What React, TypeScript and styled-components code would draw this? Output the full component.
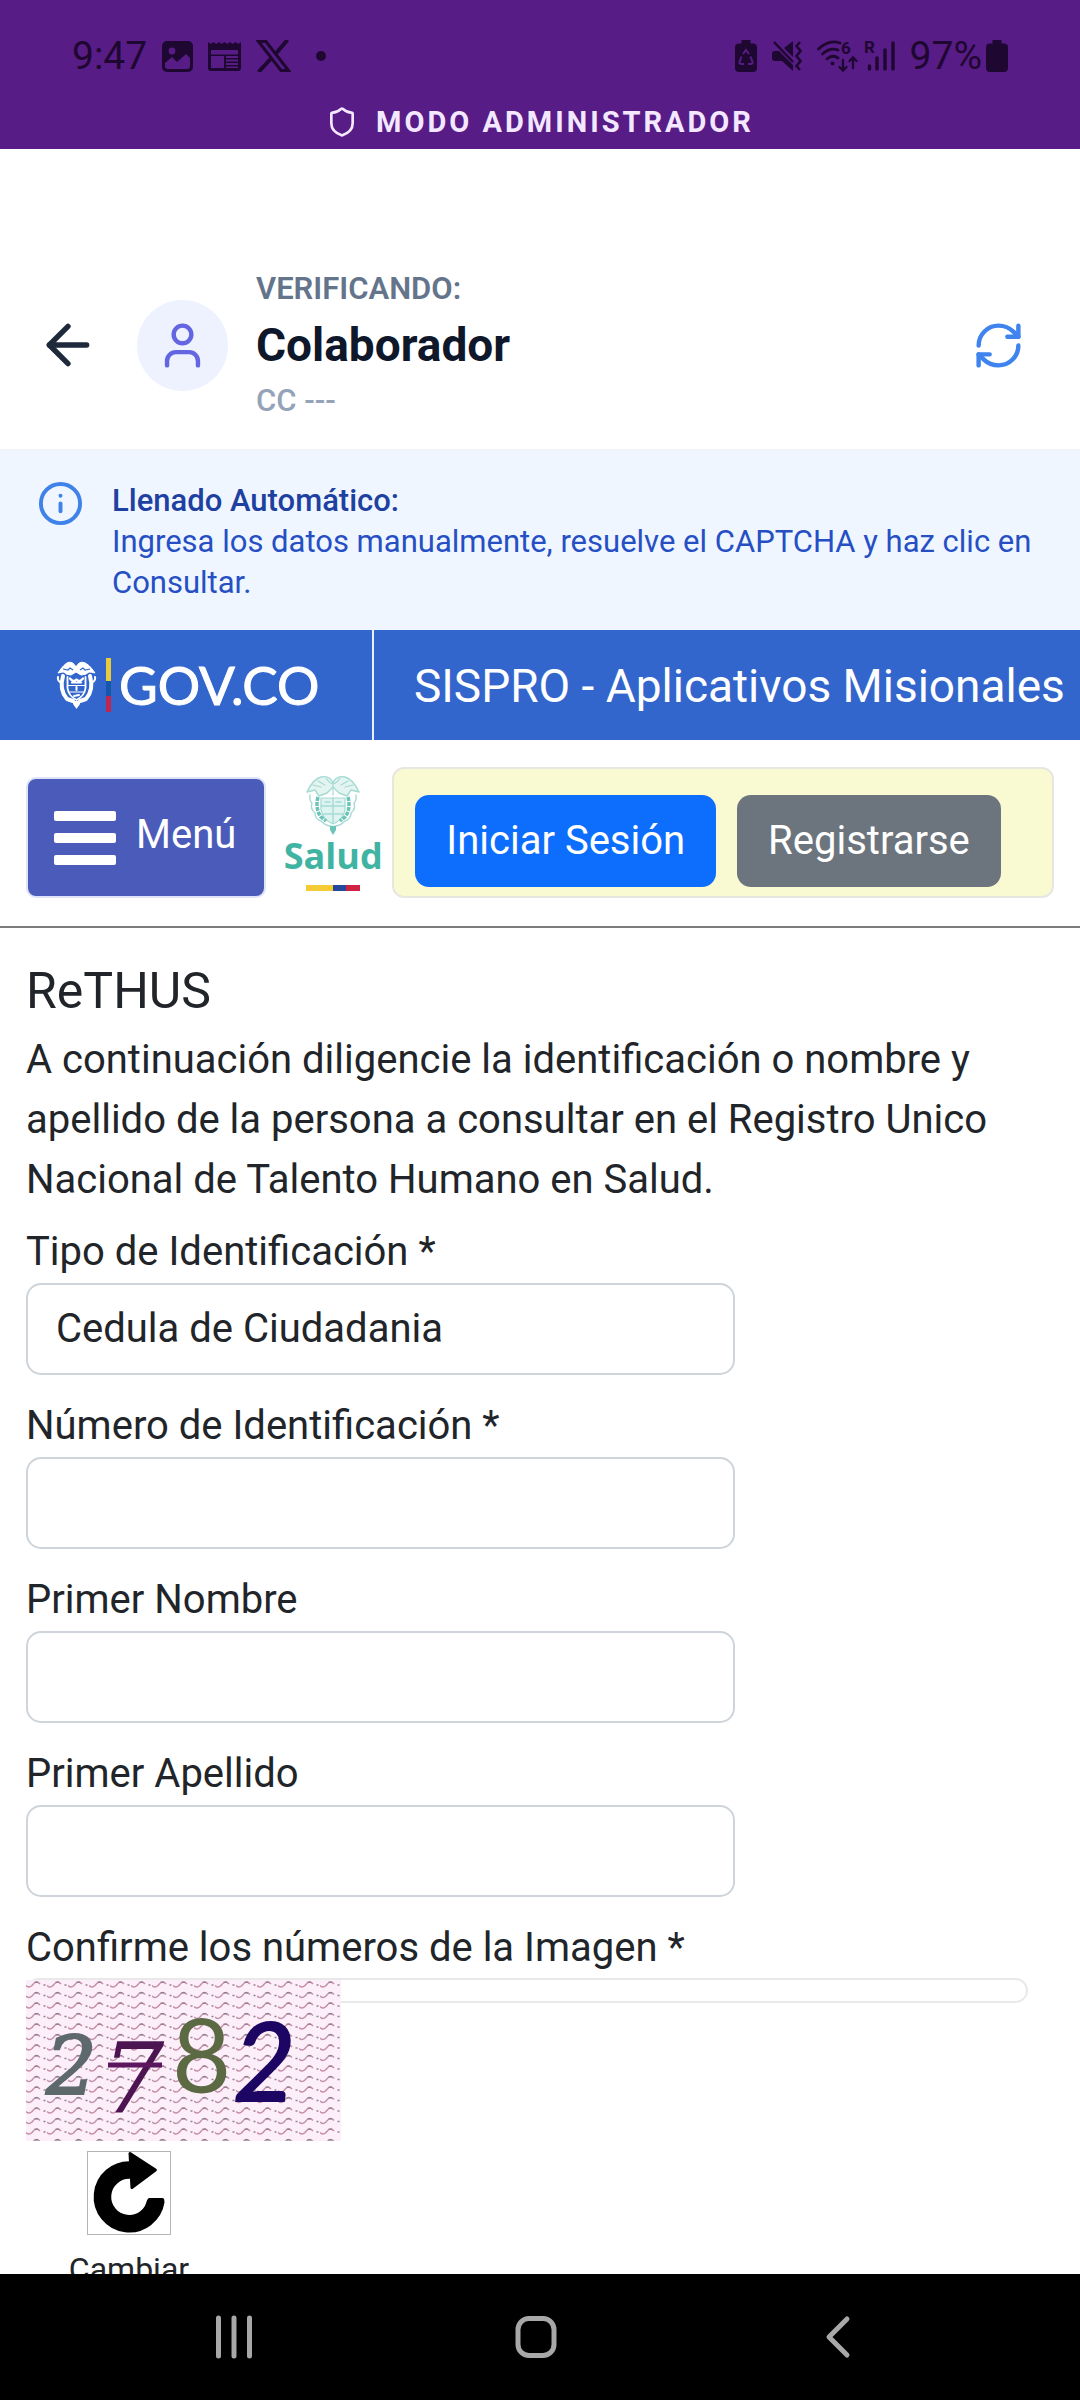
import React from "react";
import styled, { createGlobalStyle } from "styled-components";
import { ArrowLeft, Info, RefreshCw, Shield, User } from "lucide-react";

const GlobalStyle = createGlobalStyle`
  *, *::before, *::after { box-sizing: border-box; }
  body {
    margin: 0;
    background: #ffffff;
    color: #212529;
    font-family: Roboto, "Noto Sans", sans-serif;
  }
  button, input, select { font: inherit; color: inherit; }
`;

const Screen = styled.div`
  display: flex;
  flex-direction: column;
  height: 100vh;
  overflow: hidden;
`;

const Content = styled.div`
  flex: 1;
  min-height: 0;
  overflow: hidden;
`;

/* ---------- status area ---------- */

const TopArea = styled.div`
  flex: none;
  padding: 34px 72px 7px;
  background: #581c87;
`;

const StatusRow = styled.div`
  display: flex;
  align-items: center;
  justify-content: space-between;
  height: 44px;
  margin-bottom: 24px;
  color: #1e0730;
  font-size: 39px;
  line-height: 44px;
`;

const StatusGroup = styled.div<{ $gap: number }>`
  display: flex;
  align-items: center;
  gap: ${(p) => p.$gap}px;
  svg { display: block; }
`;

const Dot = styled.span`
  width: 10px;
  height: 10px;
  margin-left: 10px;
  border-radius: 50%;
  background: currentColor;
`;

const AdminMode = styled.div`
  display: flex;
  align-items: center;
  justify-content: center;
  gap: 18px;
  color: #f3e8ff;
  font-size: 29px;
  font-weight: 700;
  line-height: 40px;
  letter-spacing: 3px;
`;

/* ---------- header ---------- */

const Header = styled.header`
  display: flex;
  align-items: center;
  padding: 120px 55px 28px 36px;
  border-bottom: 2px solid #f1f5f9;
`;

const IconButton = styled.button<{ $color: string }>`
  display: flex;
  flex: none;
  padding: 0;
  border: 0;
  background: none;
  color: ${(p) => p.$color};
`;

const Avatar = styled.div`
  display: flex;
  flex: none;
  align-items: center;
  justify-content: center;
  width: 91px;
  height: 91px;
  margin: 0 28px 0 37px;
  border-radius: 50%;
  background: #eef2ff;
  color: #6366e0;
`;

const Person = styled.div`
  display: flex;
  flex: 1;
  flex-direction: column;
  gap: 8px;
`;

const Overline = styled.span`
  color: #64748b;
  font-size: 31px;
  font-weight: 600;
  line-height: 40px;
`;

const PersonName = styled.h1`
  margin: 0;
  color: #0f172a;
  font-size: 46px;
  font-weight: 700;
  line-height: 56px;
`;

const PersonId = styled.span`
  color: #94a3b8;
  font-size: 31px;
  font-weight: 500;
  line-height: 40px;
`;

const Notice = styled.section`
  display: flex;
  gap: 28px;
  padding: 29px 37px 27px;
  background: #eff6ff;
  color: #264fc4;
  font-size: 31px;
  line-height: 41px;
  svg { flex: none; color: #3f83e8; }
  p { margin: 0; }
`;

const NoticeTitle = styled.strong`
  display: block;
  color: #1e40a0;
  font-weight: 500;
`;

/* ---------- government bar ---------- */

const GovBar = styled.div`
  display: flex;
  height: 110px;
  background: #3366cc;
  color: #ffffff;
`;

const GovLogo = styled.a`
  display: flex;
  flex: none;
  align-items: center;
  width: 374px;
  padding-left: 56px;
  border-right: 2px solid #e8effb;
  color: inherit;
  text-decoration: none;
`;

const GovName = styled.span`
  font-family: Lato, "Open Sans", sans-serif;
  font-size: 53px;
  line-height: 60px;
  -webkit-text-stroke: 1px currentColor;
`;

const FlagBar = styled.span`
  width: 5px;
  height: 54px;
  margin: 0 8px 0 9px;
  background: linear-gradient(#e8cb3c 0 43%, #1557a8 43% 71%, #c1244f 71%);
`;

const AppTitle = styled.span`
  padding-left: 40px;
  font-size: 46px;
  line-height: 112px;
  white-space: nowrap;
`;

/* ---------- toolbar ---------- */

const Toolbar = styled.nav`
  display: flex;
  align-items: flex-end;
  padding: 27px 26px 28px;
  border-bottom: 2px solid #7d7d7d;
`;

const MenuButton = styled.button`
  display: flex;
  flex: none;
  align-items: center;
  gap: 20px;
  height: 121px;
  padding: 0 28px 0 26px;
  border: 2px solid #dfe3f8;
  border-radius: 10px;
  background: #4b5bb9;
  color: #ffffff;
  font-size: 40px;
  line-height: 60px;
`;

const MenuLabel = styled.span`
  padding-bottom: 6px;
`;

const Burger = styled.span`
  display: grid;
  gap: 12px;
  width: 62px;
  &::before, &::after, i {
    content: "";
    height: 10px;
    border-radius: 2px;
    background: #ffffff;
  }
`;

const HealthLogo = styled.a`
  display: flex;
  flex: none;
  flex-direction: column;
  align-items: center;
  width: 98px;
  margin: 0 10px 7px 18px;
  color: #41b3a3;
  text-decoration: none;
  font-family: "Open Sans", "Noto Sans", sans-serif;
  font-size: 36px;
  font-weight: 700;
  line-height: 42px;
  svg { display: block; }
`;

const FlagLine = styled.span`
  width: 54px;
  height: 6px;
  margin-top: 8px;
  background: linear-gradient(90deg, #f5cb35 0 50%, #24489a 50% 75%, #cf2344 75%);
`;

const SessionPanel = styled.div`
  display: flex;
  flex: 1;
  gap: 21px;
  padding: 26px 21px 9px;
  border: 2px solid #e6e7e0;
  border-radius: 12px;
  background: #f9f9d2;
`;

const SessionButton = styled.button<{ $fill: string }>`
  height: 92px;
  padding: 0 31px;
  border: 0;
  border-radius: 14px;
  background: ${(p) => p.$fill};
  color: #ffffff;
  font-size: 40px;
  line-height: 60px;
  white-space: nowrap;
`;

/* ---------- form ---------- */

const Form = styled.form`
  padding: 33px 52px 0 26px;
  font-size: 40px;
  line-height: 60px;
`;

const FormTitle = styled.h2`
  margin: 0 0 9px;
  font-size: 50px;
  font-weight: 400;
  line-height: 60px;
`;

const Intro = styled.p`
  margin: 0 0 12px;
`;

const Field = styled.div`
  display: flex;
  flex-direction: column;
  gap: 1px;
  margin-bottom: 21px;
  input, select {
    width: 100%;
    max-width: 709px;
    height: 92px;
    padding: 0 28px;
    border: 2px solid #ced4da;
    border-radius: 15px;
    background: #ffffff;
    appearance: none;
    outline: none;
  }
`;

const CaptchaFrame = styled.div`
  height: 25px;
  margin-bottom: -23px;
  border: 2px solid #e9e9e9;
  border-radius: 13px;
`;

const CaptchaImage = styled.svg`
  position: relative;
  display: block;
  margin-bottom: 10px;
`;

const ReloadButton = styled.button`
  display: flex;
  flex-direction: column;
  align-items: center;
  gap: 10px;
  width: 206px;
  padding: 0;
  border: 0;
  background: none;
  font-size: 32px;
  line-height: 48px;
  svg { border: 1px solid #b5b5b5; }
`;

/* ---------- system navigation ---------- */

const SystemNav = styled.nav`
  display: grid;
  flex: none;
  grid-template-columns: 1fr 1fr 1fr;
  align-items: center;
  height: 126px;
  padding: 0 91px 0 83px;
  background: #000000;
  button { justify-content: center; }
`;

/* ---------- drawings ---------- */

const ImageIcon = () => (
  <svg width="31" height="31" viewBox="0 0 31 31">
    <rect width="31" height="31" rx="5" fill="currentColor" />
    <circle cx="10" cy="10" r="3.4" fill="#581c87" />
    <path d="M3 25v-3l7-6 5 5 9-8 4 4v8a3 3 0 0 1-3 3H6a3 3 0 0 1-3-3z" fill="#581c87" />
  </svg>
);

const NewsIcon = () => (
  <svg width="33" height="31" viewBox="0 0 33 31">
    <path d="M0 1l2.7 2L5.500 1l2.7 2L11 1l2.7 2 2.8-2 2.7 2L22 1l2.7 2 2.8-2 2.7 2L33 1v26a3 3 0 0 1-3 3H3a3 3 0 0 1-3-3z" fill="currentColor" />
    <path d="M3 9h27v4.500H3zM3 15h13v12H3zM18 15h12v2H18zM18 18.500h12v2H18zM18 22h12v2H18zM18 25.500h12v1.500H18z" fill="#581c87" />
  </svg>
);

const XIcon = () => (
  <svg width="35" height="32" viewBox="0 0 35 32">
    <path d="M2.500 1.500h7.500l22.500 29H25z" fill="none" stroke="currentColor" strokeWidth="3" />
    <path d="M31.500 0L19 14.500M15 18.500L2.500 32" stroke="currentColor" strokeWidth="4" />
  </svg>
);

const BatteryIcon = ({ saver = false }: { saver?: boolean }) => (
  <svg width="22" height="32" viewBox="0 0 22 32">
    <path d="M6.500 0h9v3.500H18a4 4 0 0 1 4 4V28a4 4 0 0 1-4 4H4a4 4 0 0 1-4-4V7.500a4 4 0 0 1 4-4h2.500z" fill="currentColor" />
    {saver && (
      <g fill="none" stroke="#581c87" strokeWidth="2">
        <path d="M8 14l3-4 3 4M6.500 16.500L4.500 22q-.5 2 2 2H9M15.500 16.500l2 5.500q.5 2-2 2H13" />
      </g>
    )}
  </svg>
);

const MuteIcon = () => (
  <svg width="30" height="30" viewBox="0 0 30 30">
    <path d="M0 13a3 3 0 0 1 3-3h4l14 14v6L10 20H3a3 3 0 0 1-3-3zM12 7l9-7v16z" fill="currentColor" />
    <path d="M2 1l19 20" stroke="currentColor" strokeWidth="2.500" />
    <path d="M28 1l-3.500 4 4 5-4 5 4 5-4 5 3.500 4" fill="none" stroke="currentColor" strokeWidth="2.500" />
  </svg>
);

const WifiIcon = () => (
  <svg width="41" height="44" viewBox="0 -6 41 44">
    <g fill="none" stroke="currentColor" strokeWidth="2.800" strokeLinecap="round">
      <path d="M1.500 9Q12 -1 23 3M5.500 14Q13 7 21 10M10 19Q15.500 14 21 18" />
      <path d="M26 20v10M22.500 27l3.500 3.500 3.500-3.500M36 28V18M32.500 21l3.500-3.500 3.500 3.500" strokeWidth="2.400" />
    </g>
    <circle cx="15.500" cy="23.500" r="2" fill="currentColor" />
    <text x="24" y="14" fill="currentColor" fontFamily="Roboto, sans-serif" fontSize="17" fontWeight="700">6</text>
  </svg>
);

const SignalIcon = () => (
  <svg width="31" height="44" viewBox="0 -6 31 44">
    <text x="0" y="13" fill="currentColor" fontFamily="Roboto, sans-serif" fontSize="17" fontWeight="700">R</text>
    <path d="M5.500 26v3M13 18v11M21 10v19M29 3v26" stroke="currentColor" strokeWidth="3.400" strokeLinecap="round" />
  </svg>
);

const GovEmblem = () => (
  <svg width="41" height="48" viewBox="0 0 41 48">
    <g fill="none" stroke="#ffffff" strokeLinecap="round" strokeLinejoin="round">
      <path d="M20 6Q17 0 12 1.500 8 3 2 12q4-1 6-1 2 3 7 3l5-3 5 3q5 0 8-3 2 0 6 1Q33 3 28 1.500 23 0 20 6z" fill="#ffffff" strokeWidth="1" />
      <path d="M2 16q-1 4 4 6M39 16q1 4-4 6" strokeWidth="2" />
      <path d="M7 15q-4 14 4 23l6 2M34 15q4 14-4 23l-6 2" strokeWidth="4" />
      <path d="M11.500 16v11q1 8 9 12 8-4 9-12V16" strokeWidth="1.800" />
      <path d="M12 24.500h17M13 31h15" strokeWidth="1" />
      <path d="M14 17.500q3 4 6.500 1 3.500 3 6.500-1M16 21.500h9" strokeWidth="2.200" />
      <path d="M20.500 26v3M18 35l5-1" strokeWidth="2" />
    </g>
    <path d="M7 8l5 1 2-2 3 2M34 8l-5 1-2-2-3 2" fill="none" stroke="#3366cc" strokeWidth="1.200" />
    <path d="M17 40h7v3l-3.500 5-3.500-5z" fill="#ffffff" />
  </svg>
);

const HealthEmblem = () => (
  <svg width="54" height="60" viewBox="0 0 54 60">
    <g fill="none" stroke="#a5dbd4" strokeLinecap="round" strokeLinejoin="round">
      <path d="M27 8Q24 0 15 2 7 4 1 17l8-2 4 6 8-3 6-6 6 6 8 3 4-6 8 2Q47 4 39 2 30 0 27 8z" fill="#e3f4f1" strokeWidth="1.400" />
      <path d="M27 8v12M20 3q3 5 7 6M34 3q-3 5-7 6M7 10l8 2M47 10l-8 2M12 6l7 4M42 6l-7 4" strokeWidth="1.200" />
      <path d="M4 20q-1 5 2 8-2 6 3 10 0 6 6 8 5 5 10 5M50 20q1 5-2 8 2 6-3 10 0 6-6 8-5 5-10 5" strokeWidth="1.400" />
      <path d="M15 23h24v12q-2 10-12 14-10-4-12-14z" fill="#dff3f0" strokeWidth="1.200" />
      <path d="M15 31h24M17 39h20M27 23v25M19 27h5M30 27h5" strokeWidth="1.400" />
    </g>
    <path d="M12 22q-3 12 3 20l5 4M42 22q3 12-3 20l-5 4" fill="none" stroke="#6cc3b7" strokeWidth="3.500" strokeDasharray="4 1" />
    <path d="M24 51h6v4l-3 5-3-5z" fill="#6cc5b9" />
  </svg>
);

const Captcha = () => (
  <CaptchaImage width="315" height="161" viewBox="0 0 315 161" role="img" aria-label="2782">
    <defs>
      <pattern id="waves" width="21" height="21" patternUnits="userSpaceOnUse">
        <rect width="21" height="21" fill="#fdeffa" />
        <g fill="none" strokeWidth="1.500">
          <path d="M0 5.500q3 3 6 0 4-6 8-1.500" stroke="#c78ca6" />
          <path d="M17.500 5h2M8.500 2.200h3.500" stroke="#94848f" />
          <path d="M0 16q3 3 6 0 4-6 8-1.500" stroke="#c093aa" />
          <path d="M17.500 15.500h2M8.500 12.700h3.500" stroke="#8c858f" />
        </g>
      </pattern>
    </defs>
    <rect width="315" height="161" fill="url(#waves)" />
    <text x="20" y="114" fill="#5e696c" stroke="#5e696c" strokeWidth="2" fontFamily="DejaVu Serif, serif" fontSize="80" fontStyle="italic">2</text>
    <text x="76" y="132" fill="#4c1450" fontFamily="DejaVu Serif, serif" fontSize="98" fontStyle="italic">7</text>
    <path d="M82 85h54" stroke="#5c165e" strokeWidth="5" />
    <text x="146" y="113" fill="#5c6a44" fontFamily="Lato, sans-serif" fontSize="102">8</text>
    <text x="207" y="121" fill="#1d0663" stroke="#1d0663" strokeWidth="2" fontFamily="Lato, sans-serif" fontSize="108" fontStyle="italic">2</text>
  </CaptchaImage>
);

const ReloadIcon = () => (
  <svg width="84" height="84" viewBox="0 0 84 84">
    <path d="M44 18.500A27.500 27.500 0 1 0 69.500 50" fill="none" stroke="#000000" strokeWidth="18" />
    <path d="M62 47h14q3 0 2 5l-2 6-17-4z" fill="#000000" />
    <path d="M43 1.500l26 17-24 18z" fill="#000000" stroke="#000000" strokeWidth="3" strokeLinejoin="round" />
  </svg>
);

const RecentsIcon = () => (
  <svg width="44" height="44" viewBox="0 0 44 44">
    <path d="M6.500 3v38M22 3v38M37.500 3v38" stroke="currentColor" strokeWidth="5" strokeLinecap="round" />
  </svg>
);

const HomeIcon = () => (
  <svg width="44" height="44" viewBox="0 0 44 44">
    <rect x="4" y="3.500" width="36" height="37" rx="11" fill="none" stroke="currentColor" strokeWidth="5" />
  </svg>
);

const BackIcon = () => (
  <svg width="44" height="44" viewBox="0 0 44 44">
    <path d="M31 4L13 22l18 18" fill="none" stroke="currentColor" strokeWidth="5" strokeLinecap="round" strokeLinejoin="round" />
  </svg>
);

const textFields = [
  { id: "numero", label: "Número de Identificación *" },
  { id: "nombre", label: "Primer Nombre" },
  { id: "apellido", label: "Primer Apellido" },
];

export default function App() {
  return (
    <Screen>
      <GlobalStyle />
      <TopArea>
        <StatusRow>
          <StatusGroup $gap={15}>
            <span>9:47</span>
            <ImageIcon />
            <NewsIcon />
            <XIcon />
            <Dot />
          </StatusGroup>
          <StatusGroup $gap={15}>
            <BatteryIcon saver />
            <MuteIcon />
            <StatusGroup $gap={6}>
              <WifiIcon />
              <SignalIcon />
            </StatusGroup>
            <StatusGroup $gap={4}>
              <span>97%</span>
              <BatteryIcon />
            </StatusGroup>
          </StatusGroup>
        </StatusRow>
        <AdminMode>
          <Shield size={32} />
          <span>MODO ADMINISTRADOR</span>
        </AdminMode>
      </TopArea>

      <Content>
        <Header>
          <IconButton type="button" aria-label="Volver" $color="#1e293b">
            <ArrowLeft size={64} />
          </IconButton>
          <Avatar>
            <User size={53} />
          </Avatar>
          <Person>
            <Overline>VERIFICANDO:</Overline>
            <PersonName>Colaborador</PersonName>
            <PersonId>CC ---</PersonId>
          </Person>
          <IconButton type="button" aria-label="Recargar" $color="#3f83ee">
            <RefreshCw size={53} />
          </IconButton>
        </Header>

        <Notice>
          <Info size={47} />
          <p>
            <NoticeTitle>Llenado Automático:</NoticeTitle>
            Ingresa los datos manualmente, resuelve el CAPTCHA y haz clic en Consultar.
          </p>
        </Notice>

        <GovBar>
          <GovLogo href="#">
            <GovEmblem />
            <FlagBar />
            <GovName>GOV.CO</GovName>
          </GovLogo>
          <AppTitle>SISPRO - Aplicativos Misionales</AppTitle>
        </GovBar>

        <Toolbar>
          <MenuButton type="button">
            <Burger><i /></Burger>
            <MenuLabel>Menú</MenuLabel>
          </MenuButton>
          <HealthLogo href="#">
            <HealthEmblem />
            Salud
            <FlagLine />
          </HealthLogo>
          <SessionPanel>
            <SessionButton type="button" $fill="#0d6efd">Iniciar Sesión</SessionButton>
            <SessionButton type="button" $fill="#6c757d">Registrarse</SessionButton>
          </SessionPanel>
        </Toolbar>

        <Form>
          <FormTitle>ReTHUS</FormTitle>
          <Intro>
            A continuación diligencie la identificación o nombre y apellido de la persona a consultar
            en el Registro Unico Nacional de Talento Humano en Salud.
          </Intro>
          <Field>
            <label htmlFor="tipo">Tipo de Identificación *</label>
            <select id="tipo">
              <option>Cedula de Ciudadania</option>
            </select>
          </Field>
          {textFields.map((f) => (
            <Field key={f.id}>
              <label htmlFor={f.id}>{f.label}</label>
              <input id={f.id} type="text" />
            </Field>
          ))}
          <div>Confirme los números de la Imagen *</div>
          <CaptchaFrame />
          <Captcha />
          <ReloadButton type="button">
            <ReloadIcon />
            Cambiar
          </ReloadButton>
        </Form>
      </Content>

      <SystemNav>
        <IconButton type="button" aria-label="Recientes" $color="#a8a8a8"><RecentsIcon /></IconButton>
        <IconButton type="button" aria-label="Inicio" $color="#a8a8a8"><HomeIcon /></IconButton>
        <IconButton type="button" aria-label="Atrás" $color="#a8a8a8"><BackIcon /></IconButton>
      </SystemNav>
    </Screen>
  );
}
